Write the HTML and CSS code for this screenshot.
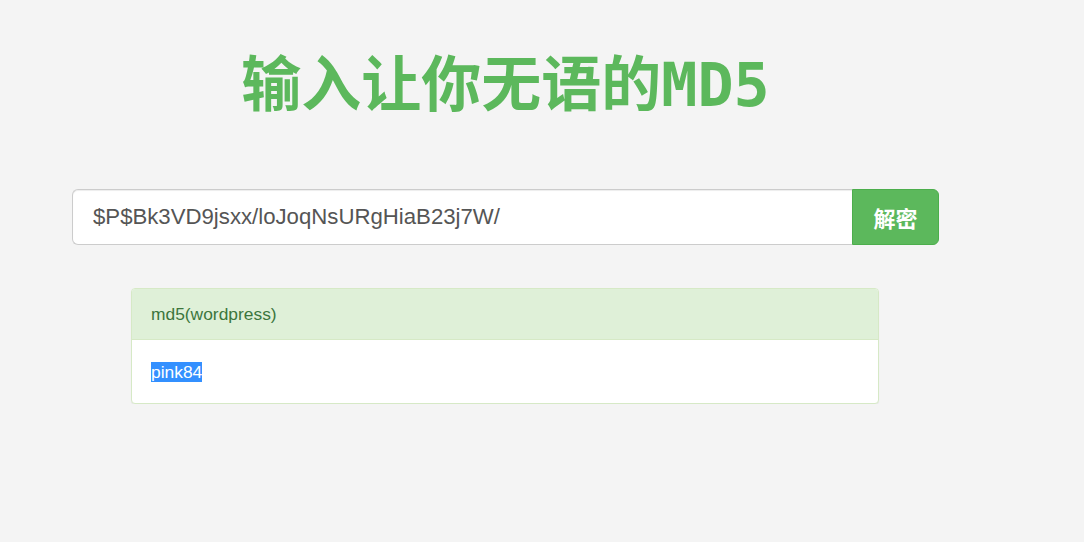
FILE: index.html
```html
<!DOCTYPE html>
<html lang="zh-CN">
<head>
    <meta charset="UTF-8">
    <title>输入让你无语的MD5</title>
    <link rel="stylesheet" href="styles.css">
</head>
<body>
    <div class="container">
        <div class="main">
            <h1 class="title">输入让你无语的MD5</h1>
            <form class="search-form">
                <div class="input-group">
                    <input type="text" class="hash-input" value="$P$Bk3VD9jsxx/loJoqNsURgHiaB23j7W/">
                    <button type="button" class="btn-decode">解密</button>
                </div>
            </form>
            <div class="panel">
                <div class="panel-heading">md5(wordpress)</div>
                <div class="panel-body"><span class="picked">pink84</span></div>
            </div>
        </div>
    </div>
</body>
</html>
```

FILE: styles.css
```css
body {
    margin: 0;
    background-color: #f4f4f4;
    font-family: "Liberation Sans", Arial, "Noto Sans CJK SC", sans-serif;
    color: #333;
}

.container {
    width: 940px;
    margin: 0 auto;
    padding: 52px 15px 0;
}

.main {
    width: 867px;
}

.title {
    margin: 0 0 71px;
    text-align: center;
    font-family: "DejaVu Sans Mono", "Noto Sans CJK SC", monospace;
    font-size: 60px;
    line-height: 66px;
    font-weight: bold;
    color: #5cb85c;
}

.search-form {
    margin: 0 0 43px;
}

.input-group {
    display: flex;
    height: 56px;
}

.hash-input {
    flex: 1;
    min-width: 0;
    box-sizing: border-box;
    height: 56px;
    padding: 0 20px;
    border: 1px solid #ccc;
    border-right: none;
    border-radius: 6px 0 0 6px;
    background: #fff;
    font-family: "Liberation Sans", Arial, sans-serif;
    font-size: 22.2px;
    color: #555;
    outline: none;
    box-shadow: inset 0 1px 1px rgba(0,0,0,0.075);
}

.btn-decode {
    width: 87px;
    height: 56px;
    border: 1px solid #4cae4c;
    border-radius: 0 6px 6px 0;
    background-color: #5cb85c;
    color: #fff;
    font-family: "Noto Sans CJK SC", sans-serif;
    font-size: 22px;
    font-weight: bold;
    cursor: pointer;
}

.panel {
    margin: 0 60px 0 59px;
    background: #fff;
    border: 1px solid #d6e9c6;
    border-radius: 4px;
    box-shadow: 0 1px 1px rgba(0,0,0,0.05);
}

.panel-heading {
    height: 51px;
    box-sizing: border-box;
    padding: 15px 19px 0;
    background-color: #dff0d8;
    border-bottom: 1px solid #d6e9c6;
    border-radius: 3px 3px 0 0;
    color: #3c763d;
    font-size: 17.4px;
    line-height: 20px;
}

.panel-body {
    height: 63px;
    box-sizing: border-box;
    padding: 21px 19px 0;
    font-size: 17.4px;
    line-height: 22px;
}

.picked {
    background-color: #3390ff;
    color: #fff;
}
```
